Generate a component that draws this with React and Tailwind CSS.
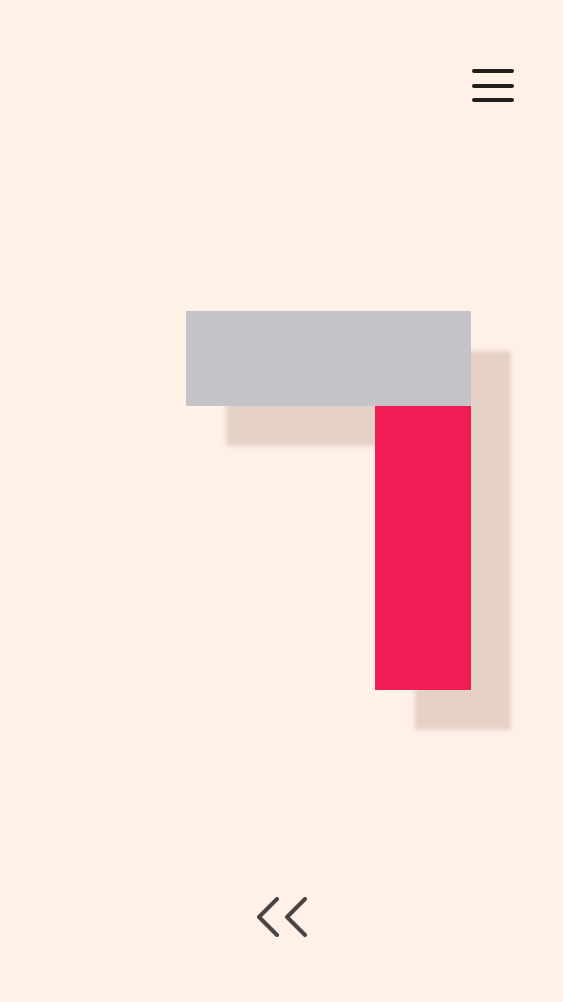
import React from 'react';

const MenuButton = () => (
    <button className="flex flex-col gap-[10.5px] w-[42px]" aria-label="Menu">
        <span className="block h-[4px] w-full rounded-full bg-[#231f1c]" />
        <span className="block h-[4px] w-full rounded-full bg-[#231f1c]" />
        <span className="block h-[4px] w-full rounded-full bg-[#231f1c]" />
    </button>
);

const BackChevrons = () => (
    <svg width="52" height="40" viewBox="0 0 52 40" fill="none" stroke="#4a4542" strokeWidth="4" strokeLinecap="round" strokeLinejoin="round">
        {/* two stacked chevrons */}
        <polyline points="21,2 3,20 21,38" />
        <polyline points="49,2 31,20 49,38" />
    </svg>
);

const App = () => {
    return (
        <div className="relative h-[1002px] w-full overflow-hidden bg-[#fff1e8] flex flex-col" style={{ fontFamily: '"Liberation Sans", Arial, sans-serif' }}>
            {/* Header */}
            <div className="flex justify-end pt-[69px] pr-[49px]">
                <MenuButton />
            </div>

            {/* Shape */}
            <div className="mt-[209px] ml-[186px] w-[285px] flex flex-col items-end [filter:drop-shadow(40px_40px_2px_#e6d1c7)]">
                <div className="h-[95px] w-full bg-[#c5c3c7]" />
                <div className="h-[284px] w-[96px] bg-[#f21d55]" />
            </div>

            {/* Footer nav */}
            <div className="mt-auto flex justify-center pb-[65px]">
                <BackChevrons />
            </div>
        </div>
    );
};

export default App;
